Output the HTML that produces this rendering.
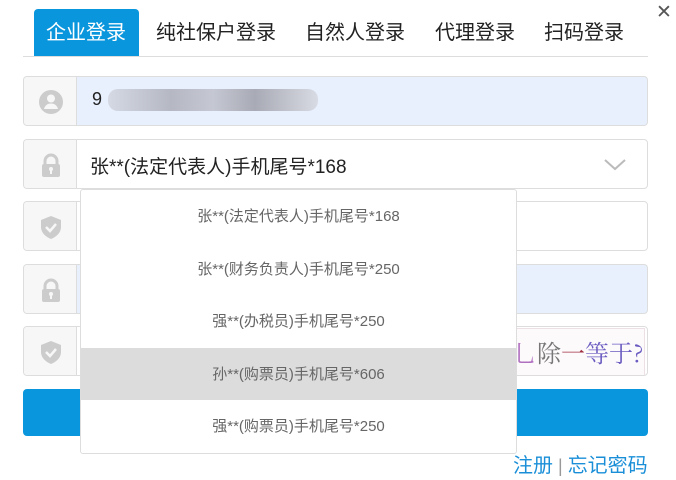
<!DOCTYPE html><html><head><style>
body{margin:0;width:676px;height:480px;background:#fff;font-family:"Liberation Sans","Noto Sans CJK SC",sans-serif;position:relative;overflow:hidden}
.a{position:absolute}
.tab{position:absolute;top:9px;height:47px;line-height:48px;font-size:20px;color:#222}
.row{position:absolute;left:23px;width:623px;height:48px;border:1px solid #ddd;border-radius:4px;background:#fff;overflow:hidden}
.ic{position:absolute;left:0;top:0;width:52px;height:48px;background:#f7f7f7;border-right:1px solid #ddd}
.ic svg{position:absolute;left:14px;top:12px}
.dd{position:absolute;left:80px;top:189px;width:435px;height:263px;border:1px solid #ddd;border-radius:3px;background:#fff}
.it{height:52.5px;line-height:54px;text-align:center;font-size:15px;color:#666}
</style></head><body>
<div class="a" style="left:34px;top:9px;width:105px;height:47px;background:#0a96dc;border-radius:4px 4px 0 0"></div>
<div class="tab" style="left:46px;color:#fff">企业登录</div>
<div class="tab" style="left:156px">纯社保户登录</div>
<div class="tab" style="left:305px">自然人登录</div>
<div class="tab" style="left:435px">代理登录</div>
<div class="tab" style="left:544px">扫码登录</div>
<div class="a" style="left:23px;top:56px;width:625px;height:1px;background:#ddd"></div>
<div class="a" style="left:656px;top:1px;font-size:19px;color:#555">✕</div>

<div class="row" style="top:76px;background:#e8f0fe"><div class="ic"><svg width="26" height="26" viewBox="0 0 26 26"><circle cx="13" cy="13" r="12" fill="#ccc"/><circle cx="13" cy="9.5" r="4" fill="#f7f7f7"/><path d="M6 20c1-4 4-5.5 7-5.5s6 1.5 7 5.5z" fill="#f7f7f7"/></svg></div>
<div class="a" style="left:68px;top:12px;font-size:18px;color:#222">9</div>
<div class="a" style="left:84px;top:12px;width:210px;height:22px;border-radius:10px;background:linear-gradient(90deg,#d5d9e3,#b5b8c3 30%,#c5c8d2 50%,#a8aab5 70%,#d8dbe3)"></div></div>

<div class="row" style="top:139px"><div class="ic"><svg width="26" height="26" viewBox="0 0 26 26"><path d="M7 12V9a6 6 0 0 1 12 0v3" stroke="#ccc" stroke-width="3" fill="none"/><rect x="4" y="12" width="18" height="13" rx="2" fill="#ccc"/><circle cx="13" cy="17" r="2" fill="#f7f7f7"/><rect x="12" y="17" width="2" height="5" fill="#f7f7f7"/></svg></div>
<div class="a" style="left:66px;top:12px;font-size:19px;color:#222">张**(法定代表人)手机尾号*168</div>
<svg class="a" style="left:580px;top:19px" width="22" height="12"><path d="M1 1l10 9 10-9" stroke="#bbb" stroke-width="2" fill="none"/></svg></div>

<div class="row" style="top:201px"><div class="ic"><svg width="26" height="26" viewBox="0 0 26 26"><path d="M13 2l10 4v7c0 6-5 10-10 12C8 23 3 19 3 13V6z" fill="#ccc"/><path d="M8 13l4 4 6-7" stroke="#f7f7f7" stroke-width="2.5" fill="none"/></svg></div></div>
<div class="row" style="top:264px;background:#e8f0fe"><div class="ic"><svg width="26" height="26" viewBox="0 0 26 26"><path d="M7 12V9a6 6 0 0 1 12 0v3" stroke="#ccc" stroke-width="3" fill="none"/><rect x="4" y="12" width="18" height="13" rx="2" fill="#ccc"/><circle cx="13" cy="17" r="2" fill="#f7f7f7"/><rect x="12" y="17" width="2" height="5" fill="#f7f7f7"/></svg></div></div>
<div class="row" style="top:326px"><div class="ic"><svg width="26" height="26" viewBox="0 0 26 26"><path d="M13 2l10 4v7c0 6-5 10-10 12C8 23 3 19 3 13V6z" fill="#ccc"/><path d="M8 13l4 4 6-7" stroke="#f7f7f7" stroke-width="2.5" fill="none"/></svg></div>
<div class="a" style="left:488px;top:1px;width:131px;height:46px;background:#fdfafc;border:1px solid #ecdfe5;font-size:24px;line-height:46px;color:#6a5cc0;font-family:'Noto Serif CJK SC',serif"><span style="color:#b070c0">乚</span><span style="color:#777">除</span><span style="color:#a03040">一</span>等于?</div></div>
<div class="a" style="left:23px;top:389px;width:625px;height:47px;background:#0a96dc;border-radius:4px"></div>
<div class="a" style="left:513px;top:449px;font-size:20px;color:#1a8fd8;white-space:nowrap">注册<span style="color:#999;margin:0 5px;font-size:18px">|</span>忘记密码</div>

<div class="dd">
<div class="it">张**(法定代表人)手机尾号*168</div>
<div class="it">张**(财务负责人)手机尾号*250</div>
<div class="it">强**(办税员)手机尾号*250</div>
<div class="it" style="background:#dcdcdc">孙**(购票员)手机尾号*606</div>
<div class="it">强**(购票员)手机尾号*250</div>
</div>
</body></html>
